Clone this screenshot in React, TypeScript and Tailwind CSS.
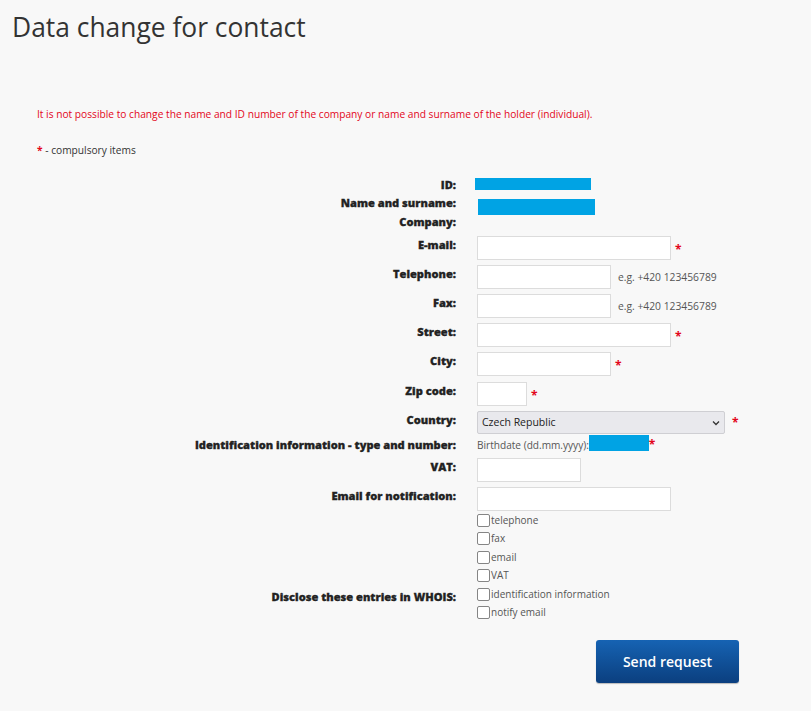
import { ReactNode } from "react"

const font = { fontFamily: '"Open Sans", "Liberation Sans", sans-serif' }

function Star() {
  return <span className="ml-[4px] text-[12px] font-bold leading-[28px] text-[#e3061b]">*</span>
}

function Hint({ children }: { children: ReactNode }) {
  return <span className="ml-[7px] text-[10.3px] leading-[24px] text-[#555]">{children}</span>
}

function Row({ label, h, children }: { label?: string; h: string; children?: ReactNode }) {
  return (
    <div className={`flex items-start ${h}`}>
      <div className="w-[456px] shrink-0 text-right text-[11.1px] font-extrabold leading-[18px] text-[#222] [-webkit-text-stroke:0.3px_#222]">
        {label}
      </div>
      <div className="ml-[21px] flex items-start">{children}</div>
    </div>
  )
}

function Field({ w }: { w: string }) {
  return <input type="text" className={`${w} block h-[24px] border border-[#dcdcdc] bg-white px-1 text-[11px] outline-none`} />
}

function Check({ label }: { label: string }) {
  return (
    <label className="flex items-center text-[10px] leading-[18px] text-[#555]">
      <input
        type="checkbox"
        className="h-[13px] w-[13px] appearance-none rounded-[2px] border border-[#858585] bg-white"
      />
      <span className="ml-px">{label}</span>
    </label>
  )
}

export default function App() {
  return (
    <div className="min-h-[711px] w-full bg-[#f8f8f8] text-[#333]" style={font}>
      <h1 className="pl-3 pt-2 text-[26.4px] font-normal leading-[38px] text-[#333]">Data change for contact</h1>

      <p className="mt-[60px] pl-[37px] text-[10.2px] leading-[16px] text-[#e3061b]">
        It is not possible to change the name and ID number of the company or name and surname of the holder (individual).
      </p>
      <p className="mt-[20px] pl-[37px] text-[10.2px] leading-[16px] text-[#333]">
        <span className="font-bold text-[#e3061b]">*</span> - compulsory items
      </p>

      <form className="mt-[18px]">
        <Row label="ID:" h="h-[18px]">
          <div className="-ml-[2px] mt-[2px] h-[12px] w-[116px] bg-[#00a3e4]" />
        </Row>
        <Row label="Name and surname:" h="h-[19px]">
          <div className="ml-px mt-[5px] h-[16px] w-[117px] bg-[#00a3e4]" />
        </Row>
        <Row label="Company:" h="h-[23px]" />
        <Row label="E-mail:" h="h-[29px]">
          <Field w="w-[194px]" />
          <Star />
        </Row>
        <Row label="Telephone:" h="h-[29px]">
          <Field w="w-[134px]" />
          <Hint>e.g. +420 123456789</Hint>
        </Row>
        <Row label="Fax:" h="h-[29px]">
          <Field w="w-[134px]" />
          <Hint>e.g. +420 123456789</Hint>
        </Row>
        <Row label="Street:" h="h-[29px]">
          <Field w="w-[194px]" />
          <Star />
        </Row>
        <Row label="City:" h="h-[30px]">
          <Field w="w-[134px]" />
          <Star />
        </Row>
        <Row label="Zip code:" h="h-[29px]">
          <Field w="w-[50px]" />
          <Star />
        </Row>
        <Row label="Country:" h="h-[25px]">
          <div className="relative">
            <select className="block h-[23px] w-[248px] appearance-none rounded-[2px] border border-[#cfcfd3] bg-[#e9e9ed] pl-[4px] text-[10.5px] text-[#222] outline-none">
              <option>Czech Republic</option>
            </select>
            <svg
              className="pointer-events-none absolute right-[4px] top-[7px]"
              width="10"
              height="10"
              viewBox="0 0 10 10"
              fill="none"
              stroke="#333"
              strokeWidth="1.3"
            >
              <path d="M2 3.5 5 6.5 8 3.5" />
            </svg>
          </div>
          <span className="-mt-[2px] ml-[3px]">
            <Star />
          </span>
        </Row>
        <Row label="Identification information - type and number:" h="h-[22px]">
          <span className="text-[10.1px] leading-[18px] text-[#555]">Birthdate (dd.mm.yyyy):</span>
          <div className="-mt-[1px] h-[16px] w-[60px] bg-[#00a3e4]" />
          <span className="text-[12px] font-bold leading-[18px] text-[#e3061b]">*</span>
        </Row>
        <Row label="VAT:" h="h-[29px]">
          <Field w="w-[104px]" />
        </Row>
        <Row label="Email for notification:" h="h-[24px]">
          <Field w="w-[194px]" />
        </Row>

        <div className="grid grid-cols-[456px_auto] grid-rows-[18px_19px_18px_19px_18px_18px] gap-x-[21px]">
          <div className="col-start-1 row-start-5 mt-[3px] text-right text-[11.1px] font-extrabold leading-[18px] text-[#222] [-webkit-text-stroke:0.3px_#222]">
            Disclose these entries in WHOIS:
          </div>
          <div className="col-start-2 row-start-1"><Check label="telephone" /></div>
          <div className="col-start-2 row-start-2"><Check label="fax" /></div>
          <div className="col-start-2 row-start-3"><Check label="email" /></div>
          <div className="col-start-2 row-start-4"><Check label="VAT" /></div>
          <div className="col-start-2 row-start-5"><Check label="identification information" /></div>
          <div className="col-start-2 row-start-6"><Check label="notify email" /></div>
        </div>

        <div className="mt-[19px] flex pl-[596px]">
          <button
            type="button"
            className="h-[43px] w-[143px] rounded-[3px] bg-gradient-to-b from-[#1663b3] to-[#0b3f7f] text-[14px] font-semibold text-white shadow-[0_1px_1px_rgba(0,0,0,0.25)]"
          >
            Send request
          </button>
        </div>
      </form>
    </div>
  )
}
